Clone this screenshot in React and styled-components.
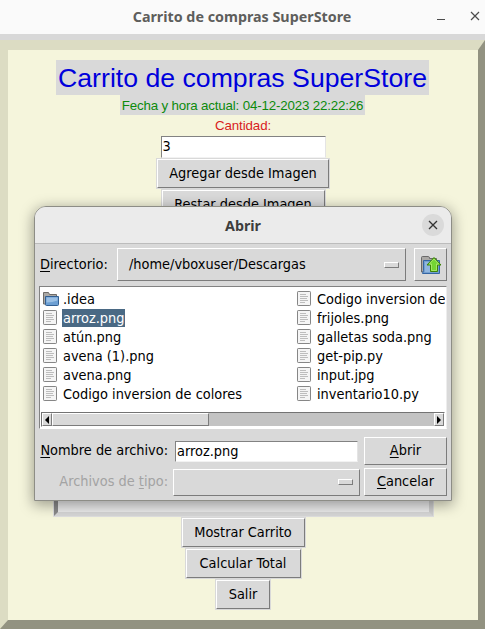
import React from "react";
import styled, { createGlobalStyle } from "styled-components";

const GlobalStyle = createGlobalStyle`
  *, *::before, *::after { box-sizing: border-box; }
  body { margin: 0; overflow: hidden; background: #d8d8d8; }
`;

const Window = styled.main`
  position: relative;
  width: 485px;
  height: 629px;
  overflow: hidden;
  display: flex;
  flex-direction: column;
  background: #d8d8d8;
  color: #000;
  font: 14.4px/19px "DejaVu Sans Condensed", "DejaVu Sans", sans-serif;
  white-space: nowrap;
`;

const TitleBar = styled.header`
  flex: 0 0 34px;
  margin-bottom: 6px;
  display: grid;
  grid-template-columns: 1fr 34px 16px;
  align-items: center;
  background: #fafafa;
`;

const WindowTitle = styled.h1`
  margin: 0 0 0 49px;
  text-align: center;
  font: bold 14.3px/34px "Noto Sans", sans-serif;
  color: #5e5e5c;
`;

const WindowControl = styled.svg`
  display: block;
  width: 16px;
  height: 16px;
  stroke: #4c4c4c;
  fill: none;
`;

const Frame = styled.section`
  flex: 0 0 589px;
  display: flex;
  flex-direction: column;
  align-items: center;
  width: 485px;
  padding-top: 10px;
  border: solid;
  border-width: 10px 7px 9px 8px;
  border-color: #dcdcc3 #929281 #929281 #dcdcc3;
  background: #f5f5dc;
`;

const Heading = styled.h2`
  margin: 0 1px 0 0;
  width: 373px;
  height: 35px;
  text-align: center;
  background: #d9d9d9;
  color: #0000dc;
  font: 26.67px/36px "Liberation Sans", Arial, sans-serif;
`;

const Clock = styled.div`
  width: 245px;
  height: 20px;
  margin-right: 1px;
  text-align: center;
  background: #d9d9d9;
  color: #0c8a0c;
  font: 13.33px/21px "Liberation Sans", Arial, sans-serif;
  letter-spacing: -0.17px;
`;

const QuantityLabel = styled.label`
  height: 21px;
  color: #d81c1c;
  font: 13.33px/21px "Liberation Sans", Arial, sans-serif;
  letter-spacing: -0.1px;
`;

const Entry = styled.div`
  width: ${(p) => p.$width}px;
  height: ${(p) => p.$height}px;
  padding-left: 1px;
  border: 1px solid;
  border-color: #828282 #e4e4e4 #f2f2f2 #828282;
  background: #fff;
  line-height: ${(p) => p.$height - 3}px;
`;

const Button = styled.button`
  flex: none;
  display: flex;
  align-items: center;
  justify-content: center;
  width: ${(p) => p.$width}px;
  height: ${(p) => p.$height || 29}px;
  margin: 0;
  padding: 0;
  border: 1px solid;
  border-color: #fff #7c7c7c #7c7c7c #fff;
  background: #d9d9d9;
  color: #000;
  font: inherit;
`;

const MainButton = styled(Button)`
  margin: 1px 0;
  outline: 1px solid #d9d9d9;
`;

const ImageCanvas = styled.div`
  width: 381px;
  height: 297px;
  border: 5px solid;
  border-color: #8a8a8a #cecece #d6d6d6 #8a8a8a;
  outline: 1px solid #dedede;
  outline-offset: -1px;
  background: #ebebeb;
`;

const Dialog = styled.section`
  position: absolute;
  left: 34px;
  top: 206px;
  width: 418px;
  height: 295px;
  overflow: hidden;
  display: flex;
  flex-direction: column;
  border: 1px solid #8d8d86;
  border-radius: 12px 12px 0 0;
  background: #d9d9d9;
`;

const DialogShadow = styled.div`
  position: absolute;
  left: 34px;
  top: 206px;
  width: 418px;
  height: 295px;
  border-radius: 12px 12px 0 0;
  box-shadow: 0 3px 14px 1px rgba(0, 0, 0, 0.36);
`;

const DialogHeader = styled.header`
  flex: 0 0 37px;
  display: grid;
  grid-template-columns: 34px 1fr 34px;
  align-items: center;
  border-bottom: 1px solid #bcbcbc;
  background: #ebebeb;
`;

const DialogTitle = styled(WindowTitle)`
  margin: 2px 0 0;
  color: #3d3d3d;
`;

const CloseButton = styled.button`
  width: 22px;
  height: 22px;
  margin: 0 0 0 5px;
  padding: 0;
  display: grid;
  place-items: center;
  border: 0;
  border-radius: 50%;
  background: #dadada;
`;

const DirectoryRow = styled.div`
  flex: none;
  display: flex;
  align-items: center;
  height: 33px;
  margin: 4px 4px 5px 5px;
`;

const DirectoryLabel = styled.label`
  width: 77px;
`;

const Mnemonic = styled.span`
  text-decoration: underline;
  text-decoration-thickness: 1px;
  text-underline-offset: 2px;
  text-decoration-skip-ink: none;
`;

const MenuButton = styled(Button)`
  justify-content: space-between;
  padding: 0 6px 0 11px;
`;

const MenuIndicator = styled.span`
  width: 15px;
  height: 6px;
  margin-left: auto;
  border: 1px solid;
  border-color: #fff #7c7c7c #7c7c7c #fff;
`;

const UpButton = styled(Button)`
  margin-left: auto;
`;

const FileList = styled.div`
  flex: none;
  display: flex;
  flex-direction: column;
  justify-content: space-between;
  width: 408px;
  height: 143px;
  margin-left: 4px;
  padding: 2px 1px 1px;
  border: 1px solid;
  border-color: #828282 #ededed #fff #828282;
  background: #fff;
`;

const FileColumns = styled.div`
  display: grid;
  grid-template-columns: 254px 1fr;
  padding-left: 1px;
  overflow: hidden;
`;

const FileRow = styled.div`
  display: flex;
  align-items: center;
  height: 19px;
`;

const FileName = styled.span`
  margin-left: ${(p) => (p.$gap)}px;
  padding: 0 1px;
  height: 18px;
  line-height: 18px;
  background: ${(p) => (p.$selected ? "#4a6984" : "transparent")};
  color: ${(p) => (p.$selected ? "#fff" : "#000")};
`;

const FileIcon = styled.svg`
  flex: none;
  display: block;
`;

const Scrollbar = styled.div`
  display: flex;
  height: 15px;
  border: 1px solid;
  border-color: #737373 #fff #fff #737373;
  background: #c3c3c3;
`;

const ScrollArrow = styled.button`
  width: 10px;
  height: 13px;
  margin: 0;
  padding: 0;
  display: grid;
  place-items: center;
  border: 1px solid;
  border-color: #fff #7c7c7c #7c7c7c #fff;
  background: #d9d9d9;
`;

const ScrollThumb = styled.div`
  width: 157px;
  margin-right: auto;
  border: 1px solid;
  border-color: #fff #7c7c7c #7c7c7c #fff;
  background: #d9d9d9;
`;

const DialogForm = styled.div`
  display: grid;
  grid-template-columns: 128px 187px 83px;
  grid-template-rows: 28px 28px;
  column-gap: 5px;
  row-gap: 3px;
  align-items: center;
  margin: 8px 4px 0 5px;
`;

const FormLabel = styled.label`
  padding-bottom: 2px;
  text-align: right;
  color: ${(p) => (p.$disabled ? "#a3a3a3" : "#000")};
`;

const NameEntry = styled(Entry)`
  margin-left: 2px;
`;

const DialogButton = styled(Button)`
  margin-left: -1px;
  padding-bottom: 1px;
`;

const DocumentIcon = () => (
  <FileIcon width="16" height="16" viewBox="0 0 16 16">
    <rect x="1.5" y="0.5" width="13" height="14" rx="0.7" fill="#f5f5f5" stroke="#868686" />
    <path d="M4 3.5h6M4 5.5h8M4 7.5h7M4 9.5h8M4 11.5h5" stroke="#bdbdbd" />
  </FileIcon>
);

const FolderIcon = () => (
  <FileIcon width="18" height="16" viewBox="0 0 18 16">
    <path d="M1.5 13V1.5h5l1 2h7v10z" fill="#aaa8a5" stroke="#6e6b68" />
    <path d="M3.5 5.5h13v8q0 1-1 1h-11q-1 0-1-1z" fill="#6c9fd3" stroke="#325f92" />
    <path d="M4.5 6.5h11v3q-5 2-11 2z" fill="#9bc0e5" />
  </FileIcon>
);

const ParentFolderIcon = () => (
  <FileIcon width="22" height="20" viewBox="0 0 22 20">
    <path d="M1.5 17V2.5q0-1 1-1h6q1 0 1 2h7v13z" fill="#aaa8a5" stroke="#696969" />
    <path d="M3.5 5.5h16v13h-17l1-3z" fill="#739fcf" stroke="#3465a4" />
    <path d="M5 7h13v10H5z" fill="#90b6df" />
    <path d="M14 2.5l7 7.5h-3.5v6.5h-7V10H7z" fill="#74d533" stroke="#3c8305" />
    <path d="M14 4l4.7 5h-2.2v6.5h-5V9H9.3z" fill="none" stroke="#a4e668" />
  </FileIcon>
);

const leftFiles = [".idea", "arroz.png", "atún.png", "avena (1).png", "avena.png", "Codigo inversion de colores"];
const rightFiles = ["Codigo inversion de", "frijoles.png", "galletas soda.png", "get-pip.py", "input.jpg", "inventario10.py"];

function Files({ names }) {
  return (
    <div>
      {names.map((name) => (
        <FileRow key={name}>
          {name === ".idea" ? <FolderIcon /> : <DocumentIcon />}
          <FileName $gap={name === ".idea" ? 2 : 4} $selected={name === "arroz.png"}>{name}</FileName>
        </FileRow>
      ))}
    </div>
  );
}

export default function App() {
  return (
    <Window>
      <GlobalStyle />
      <TitleBar>
        <WindowTitle>Carrito de compras SuperStore</WindowTitle>
        <WindowControl viewBox="0 0 16 16"><path d="M2 10.5h8" /></WindowControl>
        <WindowControl viewBox="0 0 16 16"><path d="M2 3l8 8M10 3l-8 8" strokeWidth="1.2" /></WindowControl>
      </TitleBar>
      <Frame>
        <Heading>Carrito de compras SuperStore</Heading>
        <Clock>Fecha y hora actual: 04-12-2023 22:22:26</Clock>
        <QuantityLabel>Cantidad:</QuantityLabel>
        <Entry $width={165} $height={22}>3</Entry>
        <MainButton $width={172}>Agregar desde Imagen</MainButton>
        <MainButton $width={163}>Restar desde Imagen</MainButton>
        <ImageCanvas />
        <MainButton $width={123}>Mostrar Carrito</MainButton>
        <MainButton $width={115}>Calcular Total</MainButton>
        <MainButton $width={54}>Salir</MainButton>
      </Frame>
      <DialogShadow />
      <Dialog>
        <DialogHeader>
          <span />
          <DialogTitle>Abrir</DialogTitle>
          <CloseButton>
            <svg width="10" height="10" viewBox="0 0 10 10"><path d="M1 1l8 8M9 1l-8 8" stroke="#333" strokeWidth="1.3" /></svg>
          </CloseButton>
        </DialogHeader>
        <DirectoryRow>
          <DirectoryLabel><Mnemonic>D</Mnemonic>irectorio:</DirectoryLabel>
          <MenuButton $width={289} $height={33}>/home/vboxuser/Descargas<MenuIndicator /></MenuButton>
          <UpButton $width={33} $height={33}><ParentFolderIcon /></UpButton>
        </DirectoryRow>
        <FileList>
          <FileColumns>
            <Files names={leftFiles} />
            <Files names={rightFiles} />
          </FileColumns>
          <Scrollbar>
            <ScrollArrow><svg width="6" height="8" viewBox="0 0 6 8"><path d="M5 0v8L1 4z" /></svg></ScrollArrow>
            <ScrollThumb />
            <ScrollArrow><svg width="6" height="8" viewBox="0 0 6 8"><path d="M1 0v8l4-4z" /></svg></ScrollArrow>
          </Scrollbar>
        </FileList>
        <DialogForm>
          <FormLabel><Mnemonic>N</Mnemonic>ombre de archivo:</FormLabel>
          <NameEntry $width={183} $height={21}>arroz.png</NameEntry>
          <DialogButton $width={83} $height={28}><span><Mnemonic>A</Mnemonic>brir</span></DialogButton>
          <FormLabel $disabled>Archivos de <Mnemonic>t</Mnemonic>ipo:</FormLabel>
          <MenuButton $width={187} $height={27}><MenuIndicator /></MenuButton>
          <DialogButton $width={83} $height={28}><span><Mnemonic>C</Mnemonic>ancelar</span></DialogButton>
        </DialogForm>
      </Dialog>
    </Window>
  );
}
